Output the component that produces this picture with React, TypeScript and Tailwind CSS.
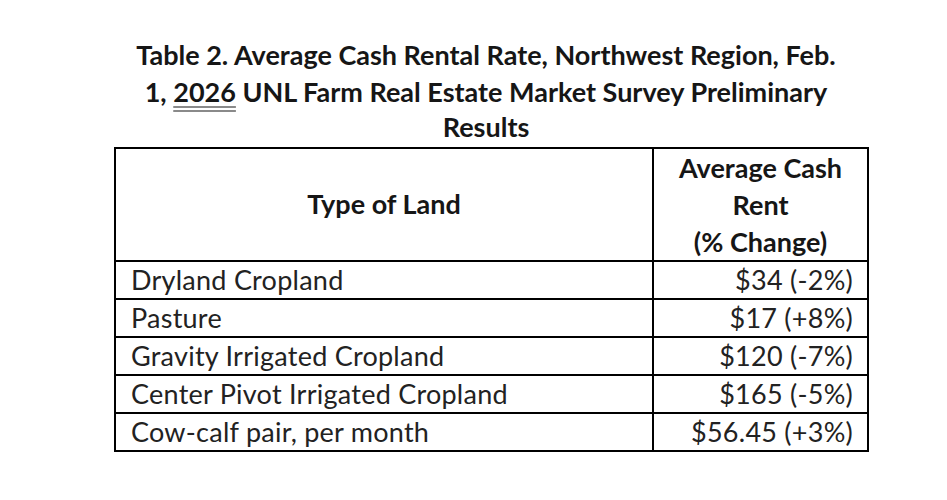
import React from "react";

interface RentRow {
  land: string;
  rent: string;
}

const rows: RentRow[] = [
  { land: "Dryland Cropland", rent: "$34 (-2%)" },
  { land: "Pasture", rent: "$17 (+8%)" },
  { land: "Gravity Irrigated Cropland", rent: "$120 (-7%)" },
  { land: "Center Pivot Irrigated Cropland", rent: "$165 (-5%)" },
  { land: "Cow-calf pair, per month", rent: "$56.45 (+3%)" },
];

const App: React.FC = () => {
  return (
    <div
      className="w-[947px] h-[500px] bg-white text-[#161616] overflow-hidden"
      style={{ fontFamily: "Lato, 'Open Sans', sans-serif" }}
    >
      {/* Title */}
      <div className="w-[760px] ml-[106px] pt-[36px] text-center font-bold text-[27px] leading-[37px]">
        <p>Table 2. Average Cash Rental Rate, Northwest Region, Feb.</p>
        <p>
          1,{" "}
          <span className="underline decoration-double decoration-[#8a8a8a] underline-offset-[4px]">
            2026
          </span>{" "}
          UNL Farm Real Estate Market Survey Preliminary
        </p>
        <p className="leading-[33px]">Results</p>
      </div>

      {/* Table */}
      <table className="mt-[4px] ml-[114px] w-[755px] border-collapse border-2 border-black">
        <thead>
          <tr className="h-[112px]">
            <th className="w-[538px] border-2 border-black font-bold text-[27px] text-center align-middle">
              Type of Land
            </th>
            <th className="border-2 border-black font-bold text-[27px] text-center align-middle leading-[37px]">
              Average Cash
              <br />
              Rent
              <br />
              (% Change)
            </th>
          </tr>
        </thead>
        <tbody>
          {rows.map((r) => (
            <tr key={r.land} className="h-[38px]">
              <td className="border-2 border-black pl-[15px] text-[27px] tracking-[0.25px] leading-[32px] text-[#222]">
                {r.land}
              </td>
              <td className="border-2 border-black pr-[14px] text-right text-[27px] tracking-[0.25px] leading-[32px] text-[#222]">
                {r.rent}
              </td>
            </tr>
          ))}
        </tbody>
      </table>
    </div>
  );
};

export default App;
